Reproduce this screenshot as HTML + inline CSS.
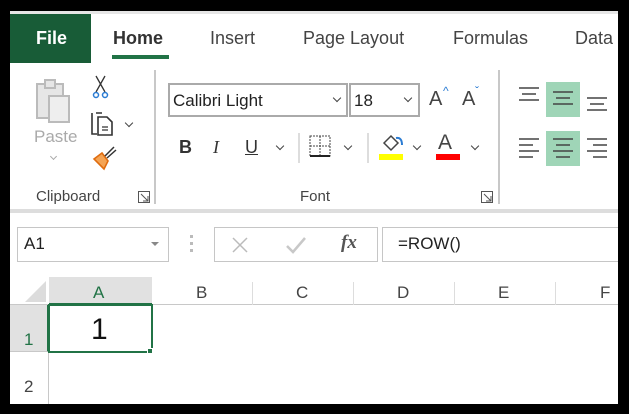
<!DOCTYPE html>
<html><head><meta charset="utf-8"><style>
*{margin:0;padding:0;box-sizing:border-box}
body{width:629px;height:414px;background:#000;position:relative;overflow:hidden;font-family:"Liberation Sans",sans-serif}
.a{position:absolute}
.t{position:absolute;font-size:18px;color:#444;white-space:nowrap}
.chev{position:absolute;width:6px;height:6px;border-right:1.5px solid #444;border-bottom:1.5px solid #444;transform:rotate(45deg)}
</style></head><body>
<div class="a" style="left:10px;top:11px;width:608px;height:393px;background:#fff"></div>
<div class="a" style="left:10px;top:11px;width:608px;height:3px;background:#e6e6e6"></div>
<div class="a" style="left:10px;top:14px;width:81px;height:49px;background:#185c37"></div>
<div class="t" style="left:36px;top:28px;color:#fff;font-weight:bold">File</div>
<div class="t" style="left:113px;top:28px;color:#333;font-weight:bold">Home</div>
<div class="a" style="left:112px;top:55px;width:57px;height:4px;background:#217346"></div>
<div class="t" style="left:210px;top:28px">Insert</div>
<div class="t" style="left:303px;top:28px">Page Layout</div>
<div class="t" style="left:453px;top:28px">Formulas</div>
<div class="t" style="left:575px;top:28px">Data</div>
<svg class="a" style="left:34px;top:76px" width="46" height="50"><rect x="3" y="8" width="26" height="34" fill="#e6e6e6" stroke="#bbb" stroke-width="2"/><rect x="11" y="4" width="10" height="8" fill="#e6e6e6" stroke="#bbb" stroke-width="2"/><rect x="15" y="20" width="20" height="26" fill="#eee" stroke="#bbb" stroke-width="2"/></svg>
<div class="t" style="left:34px;top:127px;color:#aaa;font-size:17px">Paste</div>
<div class="chev" style="left:51px;top:154px;border-color:#aaa;width:5px;height:5px"></div>
<svg class="a" style="left:92px;top:74px" width="20" height="26"><path d="M4 2 L13 18 M13 2 L4 18" stroke="#333" stroke-width="1.3"/><circle cx="4" cy="21" r="2.5" fill="none" stroke="#2b7cd3" stroke-width="1.5"/><circle cx="13" cy="21" r="2.5" fill="none" stroke="#2b7cd3" stroke-width="1.5"/></svg>
<svg class="a" style="left:90px;top:110px" width="28" height="28"><path d="M6 3 H12 M2 3 V24 H7" stroke="#333" stroke-width="1.6" fill="none"/><path d="M8 7 H17 L22 12 V25 H8 Z" stroke="#333" stroke-width="1.6" fill="none"/><path d="M12 17 H18 M12 20 H18" stroke="#333" stroke-width="1.2"/></svg>
<div class="chev" style="left:126px;top:120px"></div>
<svg class="a" style="left:92px;top:145px" width="26" height="26"><path d="M2 14 L10 8 L16 16 L12 24 Z" fill="#f5a454" stroke="#e06d10" stroke-width="1.6"/><path d="M13 11 L22 2 M15 13 L24 5" stroke="#333" stroke-width="1.5"/></svg>
<div class="t" style="left:36px;top:188px;font-size:15px">Clipboard</div>
<svg class="a" style="left:138px;top:191px" width="12" height="12"><rect x="0.5" y="0.5" width="11" height="11" fill="none" stroke="#555"/><path d="M3 3 L10 10 M10 5 V10 H5" stroke="#555" fill="none"/></svg>
<div class="a" style="left:154px;top:70px;width:2px;height:134px;background:#c8c8c8"></div>
<div class="a" style="left:168px;top:83px;width:180px;height:34px;border:2px solid #aaa"></div>
<div class="t" style="left:173px;top:91px;color:#222;font-size:17px">Calibri Light</div>
<div class="chev" style="left:334px;top:95px"></div>
<div class="a" style="left:349px;top:83px;width:71px;height:34px;border:2px solid #aaa"></div>
<div class="t" style="left:354px;top:91px;color:#222;font-size:17px">18</div>
<div class="chev" style="left:405px;top:95px"></div>
<div class="t" style="left:429px;top:88px;font-size:20px">A</div>
<div class="t" style="left:443px;top:84px;font-size:12px;color:#2b7cd3">^</div>
<div class="t" style="left:462px;top:88px;font-size:20px">A</div>
<div class="t" style="left:475px;top:84px;font-size:12px;color:#2b7cd3">ˇ</div>
<div class="t" style="left:179px;top:137px;font-weight:bold;color:#333">B</div>
<div class="t" style="left:213px;top:137px;font-style:italic;font-family:'Liberation Serif',serif;color:#333">I</div>
<div class="t" style="left:245px;top:137px;text-decoration:underline;color:#333">U</div>
<div class="chev" style="left:277px;top:143px"></div>
<div class="a" style="left:298px;top:133px;width:2px;height:30px;background:#ddd"></div>
<svg class="a" style="left:309px;top:135px" width="22" height="24"><rect x="1" y="1" width="20" height="20" fill="none" stroke="#444" stroke-dasharray="2 1"/><path d="M1 11 H21 M11 1 V21" stroke="#444" stroke-dasharray="2 1"/><path d="M1 21 H21" stroke="#222" stroke-width="2"/></svg>
<div class="chev" style="left:345px;top:143px"></div>
<div class="a" style="left:367px;top:133px;width:2px;height:30px;background:#ddd"></div>
<svg class="a" style="left:380px;top:133px" width="26" height="20"><path d="M4 10 L11 3 L18 10 L11 17 Z" fill="none" stroke="#444" stroke-width="1.5"/><path d="M16 5 Q22 4 22 12" stroke="#2b7cd3" stroke-width="2" fill="none"/></svg>
<div class="a" style="left:379px;top:154px;width:24px;height:6px;background:#ff0"></div>
<div class="chev" style="left:414px;top:143px"></div>
<div class="t" style="left:438px;top:131px;font-size:21px">A</div>
<div class="a" style="left:436px;top:154px;width:24px;height:6px;background:#f00"></div>
<div class="chev" style="left:472px;top:143px"></div>
<div class="t" style="left:300px;top:188px;font-size:15px">Font</div>
<svg class="a" style="left:481px;top:191px" width="12" height="12"><rect x="0.5" y="0.5" width="11" height="11" fill="none" stroke="#555"/><path d="M3 3 L10 10 M10 5 V10 H5" stroke="#555" fill="none"/></svg>
<div class="a" style="left:498px;top:70px;width:2px;height:134px;background:#c8c8c8"></div>
<div class="a" style="left:546px;top:82px;width:34px;height:35px;background:#9fd5b7"></div>
<div class="a" style="left:546px;top:131px;width:34px;height:35px;background:#9fd5b7"></div>
<svg class="a" style="left:515px;top:82px" width="103" height="86">
<g stroke="#444" stroke-width="1.5">
<path d="M4 6 H24 M7 12 H21 M4 18 H24"/>
<path d="M38 10 H58 M41 16 H55 M38 22 H58"/>
<path d="M72 16 H92 M75 22 H89 M72 28 H92"/>
<path d="M4 57 H24 M4 63 H18 M4 69 H24 M4 75 H18"/>
<path d="M38 57 H58 M41 63 H55 M38 69 H58 M41 75 H55"/>
<path d="M72 57 H92 M78 63 H92 M72 69 H92 M78 75 H92"/>
</g></svg>
<div class="a" style="left:10px;top:209px;width:608px;height:4px;background:#ddd"></div>
<div class="a" style="left:17px;top:227px;width:152px;height:35px;border:1px solid #c6c6c6"></div>
<div class="t" style="left:24px;top:234px;color:#222;font-size:17px">A1</div>
<div class="a" style="left:151px;top:242px;border-left:4px solid transparent;border-right:4px solid transparent;border-top:4px solid #888"></div>
<div class="a" style="left:190px;top:235px;width:3px;height:3px;background:#bbb"></div>
<div class="a" style="left:190px;top:242px;width:3px;height:3px;background:#bbb"></div>
<div class="a" style="left:190px;top:249px;width:3px;height:3px;background:#bbb"></div>
<div class="a" style="left:214px;top:227px;width:164px;height:35px;border:1px solid #c6c6c6"></div>
<svg class="a" style="left:230px;top:235px" width="20" height="20"><path d="M3 3 L17 17 M17 3 L3 17" stroke="#bbb" stroke-width="1.5"/></svg>
<svg class="a" style="left:285px;top:235px" width="22" height="20"><path d="M2 11 L8 17 L20 3" stroke="#c8c8c8" stroke-width="2.5" fill="none"/></svg>
<div class="t" style="left:341px;top:232px;font-family:'Liberation Serif',serif;font-style:italic;font-weight:bold;color:#555;font-size:19px">fx</div>
<div class="a" style="left:382px;top:227px;width:240px;height:35px;border:1px solid #c6c6c6"></div>
<div class="t" style="left:398px;top:234px;color:#222;font-size:17px">=ROW()</div>
<div class="a" style="left:10px;top:277px;width:608px;height:28px;background:#fff;border-bottom:1px solid #c8c8c8"></div>
<svg class="a" style="left:10px;top:277px" width="39" height="28"><path d="M36 4 V25 H15 Z" fill="#dcdcdc"/></svg>
<div class="a" style="left:49px;top:277px;width:103px;height:28px;background:#e1e1e1;border-bottom:2px solid #217346"></div>
<div class="a" style="left:10px;top:305px;width:39px;height:99px;background:#fff;border-right:1px solid #c8c8c8"></div>
<div class="a" style="left:10px;top:305px;width:39px;height:47px;background:#e1e1e1;border-right:2px solid #217346;border-bottom:1px solid #c8c8c8"></div>
<div class="a" style="left:252px;top:282px;width:1px;height:23px;background:#ddd"></div>
<div class="a" style="left:353px;top:282px;width:1px;height:23px;background:#ddd"></div>
<div class="a" style="left:454px;top:282px;width:1px;height:23px;background:#ddd"></div>
<div class="a" style="left:555px;top:282px;width:1px;height:23px;background:#ddd"></div>
<div class="t" style="left:93px;top:283px;color:#217346;font-size:17px">A</div>
<div class="t" style="left:196px;top:283px;font-size:17px">B</div>
<div class="t" style="left:296px;top:283px;font-size:17px">C</div>
<div class="t" style="left:397px;top:283px;font-size:17px">D</div>
<div class="t" style="left:498px;top:283px;font-size:17px">E</div>
<div class="t" style="left:600px;top:283px;font-size:17px">F</div>
<div class="t" style="left:24px;top:330px;color:#217346;font-size:17px">1</div>
<div class="t" style="left:24px;top:377px;font-size:17px">2</div>
<div class="a" style="left:48px;top:304px;width:105px;height:49px;border:2px solid #217346"></div>
<div class="a" style="left:147px;top:348px;width:6px;height:6px;background:#217346;border:1px solid #fff"></div>
<div class="t" style="left:91px;top:313px;color:#111;font-size:30px;font-weight:300">1</div>
<div class="a" style="left:618px;top:0;width:11px;height:414px;background:#000"></div>
</body></html>
